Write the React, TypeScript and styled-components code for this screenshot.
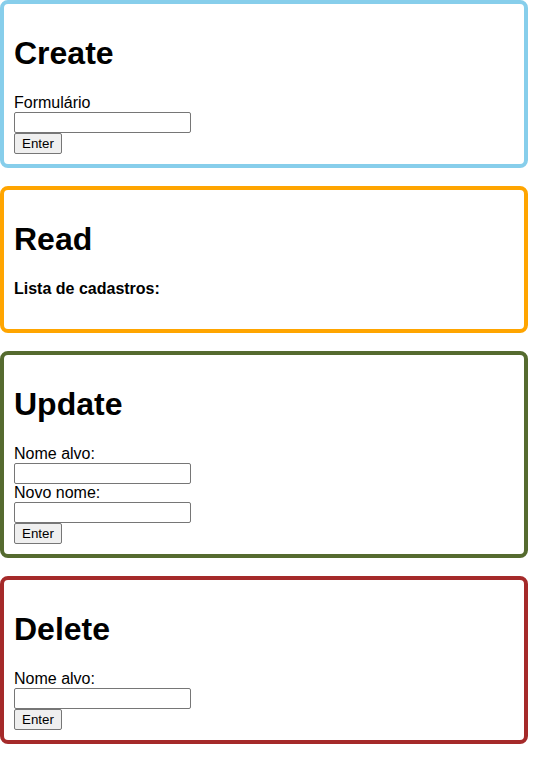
import React from "react";
import styled, { createGlobalStyle } from "styled-components";

const Global = createGlobalStyle`
  html, body { margin: 0; padding: 0; background: #fff; }
  body { font-family: "Liberation Sans", Arial, sans-serif; color: #000; }
`;

const Page = styled.div`
  width: 528px;
  display: flex;
  flex-direction: column;
  gap: 18px;
`;

const Card = styled.section<{ $color: string }>`
  box-sizing: border-box;
  width: 100%;
  border: 4px solid ${(p) => p.$color};
  border-radius: 8px;
  padding: 10px;
`;

const Title = styled.h1`
  font-size: 32px;
  font-weight: bold;
  margin: 21.44px 0;
  line-height: normal;
`;

const Form = styled.div`
  display: flex;
  flex-direction: column;
  align-items: flex-start;
`;

const Label = styled.label`
  font-size: 16px;
  line-height: normal;
`;

const Input = styled.input`
  box-sizing: border-box;
  width: 177px;
  height: 21px;
  margin: 0;
  padding: 1px 2px;
  border: 1px solid #767676;
  border-radius: 2px;
  background: #fff;
  font-family: "Liberation Sans", Arial, sans-serif;
  font-size: 13.33px;
`;

const Button = styled.button`
  box-sizing: border-box;
  height: 21px;
  width: 48px;
  margin: 0;
  padding: 1px 6px;
  border: 1px solid #767676;
  border-radius: 2px;
  background: #efefef;
  color: #000;
  font-family: "Liberation Sans", Arial, sans-serif;
  font-size: 13.33px;
`;

const Subtitle = styled.h4`
  font-size: 16px;
  font-weight: bold;
  margin: 21.28px 0;
`;

export default function App() {
  return (
    <>
      <Global />
      <Page>
        <Card $color="#87CEEB">
          <Title>Create</Title>
          <Form>
            <Label>Formulário</Label>
            <Input type="text" />
            <Button>Enter</Button>
          </Form>
        </Card>
        <Card $color="#FFA500">
          <Title>Read</Title>
          <Subtitle>Lista de cadastros:</Subtitle>
        </Card>
        <Card $color="#556B2F">
          <Title>Update</Title>
          <Form>
            <Label>Nome alvo:</Label>
            <Input type="text" />
            <Label>Novo nome:</Label>
            <Input type="text" />
            <Button>Enter</Button>
          </Form>
        </Card>
        <Card $color="#A52A2A">
          <Title>Delete</Title>
          <Form>
            <Label>Nome alvo:</Label>
            <Input type="text" />
            <Button>Enter</Button>
          </Form>
        </Card>
      </Page>
    </>
  );
}
